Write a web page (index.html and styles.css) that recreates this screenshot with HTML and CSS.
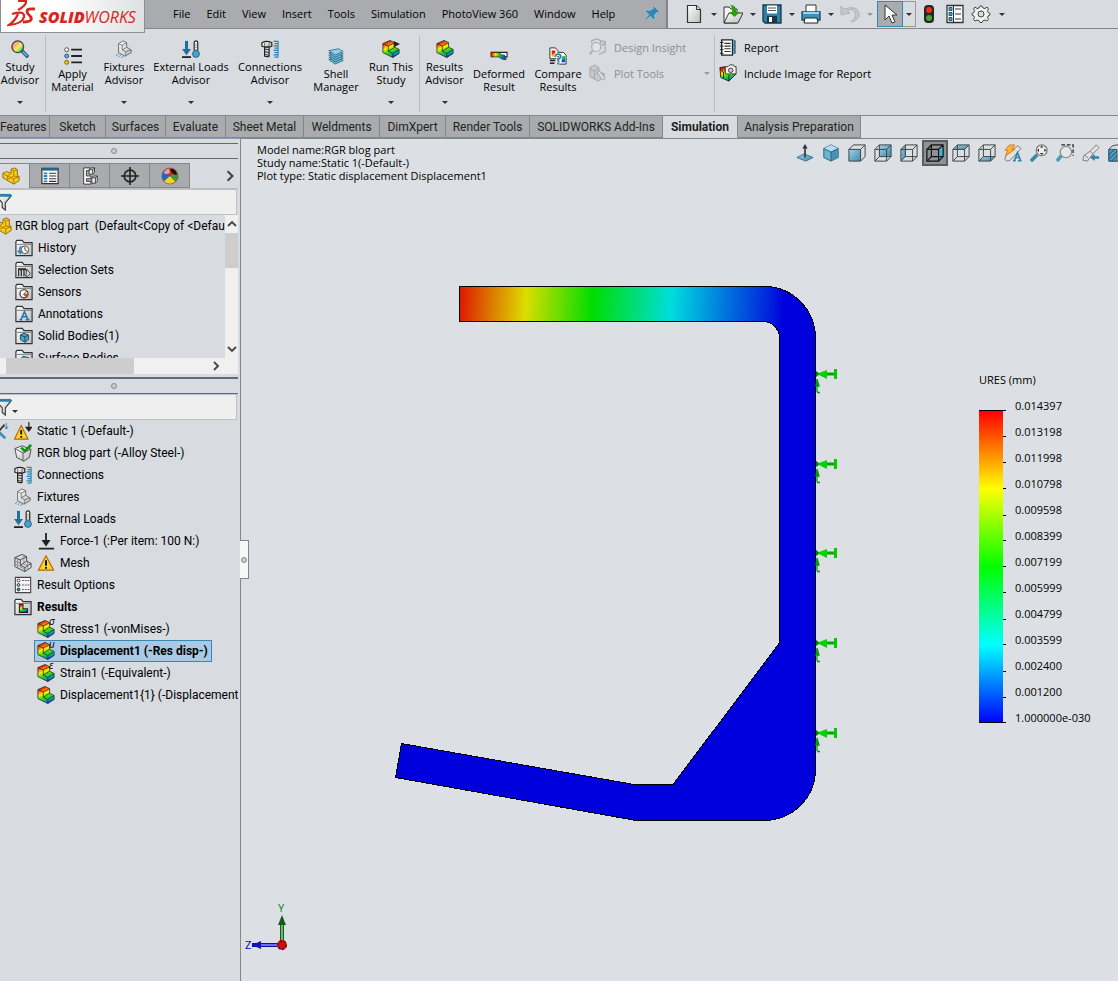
FILE: index.html
```html
<!DOCTYPE html>
<html lang="en">
<head>
<meta charset="utf-8">
<title>SOLIDWORKS Simulation</title>
<link rel="stylesheet" href="styles.css">
</head>
<body>
<svg class="defs" aria-hidden="true">
  <defs>
    <linearGradient id="rain" x1="0" y1="0" x2=".4" y2="1">
      <stop offset=".15" stop-color="#f01000"/><stop offset=".34" stop-color="#ff8a00"/><stop offset=".48" stop-color="#ffee00"/><stop offset=".66" stop-color="#4ae018"/><stop offset=".84" stop-color="#10c040"/><stop offset=".95" stop-color="#0090e0"/><stop offset="1" stop-color="#0050e0"/>
    </linearGradient>
    <linearGradient id="rainH"><stop offset="0" stop-color="#f01000"/><stop offset=".3" stop-color="#ffd800"/><stop offset=".55" stop-color="#20c820"/><stop offset=".85" stop-color="#0058e0"/></linearGradient>
    <linearGradient id="lensfill" x1="0" y1="0" x2="1" y2="1"><stop offset="0" stop-color="#e79ad0"/><stop offset=".35" stop-color="#ffb070"/><stop offset=".55" stop-color="#f4f060"/><stop offset=".8" stop-color="#50d860"/><stop offset="1" stop-color="#40a8e0"/></linearGradient>
    <linearGradient id="metal" x1="0" y1="0" x2="1" y2="1"><stop offset="0" stop-color="#fff"/><stop offset="1" stop-color="#bcbcbc"/></linearGradient>
    <linearGradient id="aqua" x1="0" y1="0" x2="1" y2="1"><stop offset="0" stop-color="#9fd3ec"/><stop offset="1" stop-color="#3c8bae"/></linearGradient>
    <symbol id="block" viewBox="0 0 20 20">
      <path d="M1 4 9 .500l5 2.500v5l5 2.500v4.500L12 19.500 1 14z" stroke="#2c2c2c" stroke-width=".9" stroke-linejoin="round"/>
      <path d="M1 4 7 6.500l7-3.500M7 6.500v6l5 2.500 7-4.500M7 12.500l7-4.500M12 15v4.500" fill="none" stroke="#2c2c2c" stroke-width=".9"/>
    </symbol>
    <symbol id="plot" viewBox="0 0 20 20"><use href="#block" fill="url(#rain)"/></symbol>
    <symbol id="fixture" viewBox="0 0 20 20">
      <path d="M4 4 9 1l4 2v5l5 3v3l-7 4-7-4z" fill="url(#metal)" stroke="#666"/><path d="M4 4l4 2 5-3M8 6v5l4 2 6-2M8 11l5-3M12 13v5" fill="none" stroke="#777"/>
      <path d="M1 18l3-3M4 19l3-3M7 20l3-3" stroke="#3a8db5"/>
    </symbol>
    <symbol id="loads" viewBox="0 0 20 20">
      <path d="M5 1v11" stroke="#1f7199" stroke-width="3.400"/><path d="M0 10h10l-5 7z" fill="#1f7199"/><path d="M0 19h10" stroke="#222" stroke-width="2"/>
      <path d="M13.500 12V3a2 2 0 0 1 4 0v9" fill="#fff" stroke="#222" stroke-width="1.300"/><path d="M15.500 4v9" stroke="#222" stroke-dasharray="1 1"/><circle cx="15.500" cy="15.500" r="3.800" fill="#4aa3cd" stroke="#205f80"/>
    </symbol>
    <symbol id="bolt" viewBox="0 0 20 20">
      <path d="M1 3q5-3 11 0v4q-5 2-11 0z" fill="url(#metal)" stroke="#222" stroke-width="1.300"/><path d="M4 3v4M9 3v4" stroke="#666"/>
      <path d="M4 8h5v10q-2 1-5 0z" fill="#ddd" stroke="#222" stroke-width="1.300"/><path d="M4 10l5 1M4 13l5 1M4 16l5 1" stroke="#222"/>
      <path d="M19 1v18M14 1.500h5M15 4h4M14 6.500h5M15 9h4M14 11.500h5M15 14h4M14 16.500h5M15 19h4" stroke="#2e83ac" stroke-width="1.200"/>
    </symbol>
    <symbol id="lens" viewBox="0 0 20 20">
      <path d="M12 12l7 7" stroke="#1e5876" stroke-width="4"/><path d="M13 13l5 5" stroke="#62b2d6" stroke-width="2"/>
      <circle cx="7.500" cy="7.500" r="6.500" fill="url(#lensfill)" stroke="#444" stroke-width="1.500"/>
    </symbol>
    <symbol id="bullets" viewBox="0 0 20 20">
      <path d="M8 3h12M8 10h12M8 17h12" stroke="#222" stroke-width="2"/><circle cx="3" cy="3" r="2.200" fill="#fff" stroke="#444"/><circle cx="3" cy="10" r="2.200" fill="#54b2dd" stroke="#245a74"/><circle cx="3" cy="17" r="2.200" fill="#ffc000" stroke="#7a5a00"/>
    </symbol>
    <symbol id="shell" viewBox="0 0 20 20">
      <g fill="#6bb6d6" stroke="#1f5e7c" stroke-width=".8" stroke-linejoin="round"><path d="M2 14l11-2 5 3-9 4z"/><path d="M2 11.500l11-2 5 3-9 4z"/><path d="M2 9l11-2 5 3-9 4z"/><path d="M2 6.500l11-2 5 3-9 4z"/><path d="M2 4l11-2 5 3-9 4z" fill="#8fd0ea"/></g>
    </symbol>
    <symbol id="run" viewBox="0 0 20 20"><use href="#block" fill="url(#rain)"/><path d="M13 1l7 3.500-7 3.500z" fill="#222"/></symbol>
    <symbol id="deformed" viewBox="0 0 20 20"><path d="M1 6h18v5h-5" fill="#fff" stroke="#222" stroke-width="1.200"/><path d="M1 6h9q3 4 6 3l2 5q-6 0-8-3H1z" fill="url(#rainH)" stroke="#222" stroke-width=".8"/></symbol>
    <symbol id="compare" viewBox="0 0 20 20">
      <path d="M1 1h6l3 3v9H1z" fill="#fff" stroke="#222"/><path d="M11 6h5l3 3v10h-8z" fill="#fff" stroke="#222"/><path d="M3 4h4v7H3zM14 10h4v7h-4z" fill="url(#rain)"/><path d="M1 15h6M1 18h5" stroke="#222" stroke-width="1.500"/><path d="M7 11q0-3 3-3t3 2.500q0 2-3 3v2m0 2v2" fill="none" stroke="#fff" stroke-width="3.500"/><path d="M7 11q0-3 3-3t3 2.500q0 2-3 3v2m0 2v2" fill="none" stroke="#2480ae" stroke-width="2"/>
    </symbol>
    <symbol id="insight" viewBox="0 0 20 20"><g fill="none" stroke="#a9abae" stroke-width="1.300"><path d="M3 6V3l6-2 4 2 5 1v11l-7 3"/><circle cx="8" cy="10" r="5" fill="#e2e4e7"/><path d="M4 14l-3 4M13 3v3M18 6l-4 2" stroke-width="2"/></g></symbol>
    <symbol id="plottools" viewBox="0 0 20 20"><g fill="#c6c8cb" stroke="#a4a6a9"><path d="M1 4l5-3 5 3v4l6 3v4l-7 4-9-5z"/><path d="M1 5l5 3v9M6 8l5-3M6 12l5-3 6 3" fill="none"/><path d="M9 9l6 9 3-2-6-8z" fill="#dcdde0"/></g></symbol>
    <symbol id="report" viewBox="0 0 20 20"><path d="M3 2h12v17H3z" fill="#fff" stroke="#222" stroke-width="1.500"/><path d="M6 6h7M6 9h7M6 12h7M6 15h7" stroke="#333" stroke-width="1.200"/><path d="M1 5h4M1 9h4M1 13h4M1 17h4" stroke="#222"/><path d="M16 3h2v4h-2M16 8h2v4h-2M16 13h2v4h-2" fill="#3c9bc9" stroke="#1e5876"/></symbol>
    <symbol id="camera" viewBox="0 0 20 20"><path d="M1 4l6-1v7l12 1-8 8-9-4z" fill="url(#rain)" stroke="#222"/><path d="M11 12v7M1 5l4 4v7" fill="none" stroke="#222"/><path d="M7 3h3l2-2h4l1 2h2v8H7z" fill="#f4f4f4" stroke="#333"/><circle cx="13" cy="7" r="2.500" fill="#ccc" stroke="#333"/></symbol>
    <symbol id="new" viewBox="0 0 20 20"><path d="M3.500 1.500h9l4 4v13h-13z" fill="url(#metal)" stroke="#333" stroke-width="1.200"/><path d="M12.500 1.500v4h4" fill="#ddd" stroke="#333"/></symbol>
    <symbol id="open" viewBox="0 0 20 20"><path d="M1 19V3h5l2 2h6v14z" fill="#f4f4f4" stroke="#333"/><path d="M1 19l5-10h14l-5 10z" fill="url(#metal)" stroke="#333"/><path d="M7 1q7 0 6 7h4l-5.500 5L6 8h3q1-4-2-7z" fill="#2f9a12"/></symbol>
    <symbol id="save" viewBox="0 0 20 20"><path d="M1 1h18v18H3l-2-2z" fill="#2f81a8" stroke="#17384a" stroke-width="1.300"/><path d="M5 1.500h10v8H5z" fill="#fff"/><path d="M6 4h8M6 6.500h8" stroke="#555"/><path d="M5 12h10v7H5z" fill="#17384a"/><path d="M7 13h3v5H7z" fill="#fff"/></symbol>
    <symbol id="print" viewBox="0 0 20 20"><path d="M5 9V1h10v8" fill="#fff" stroke="#333"/><path d="M1 8h18v8H1z" fill="#3a93bd" stroke="#17485f" stroke-width="1.300"/><path d="M2 9h16" stroke="#9ad4ef" stroke-width="2"/><path d="M4 14h12l1 5H3z" fill="#fff" stroke="#222"/></symbol>
    <symbol id="undo" viewBox="0 0 20 20"><path d="M1 2v9l9-2-3-2q5-3 8 1 2 5-4 10 9-2 8-9-2-8-15-4z" fill="#c5c7ca" stroke="#b0b2b5"/></symbol>
    <symbol id="cursor" viewBox="0 0 20 20"><path d="M5 1v15l4-4 3 7 3-1-3-7h5z" fill="#fff" stroke="#333"/></symbol>
    <symbol id="traffic" viewBox="0 0 20 20"><rect x="5" y="1" width="10" height="18" rx="4" fill="#262626"/><circle cx="10" cy="6" r="3" fill="#e8321c"/><circle cx="10" cy="14" r="3" fill="#4da33b"/></symbol>
    <symbol id="options" viewBox="0 0 20 20"><path d="M2 1.500h16v17H2z" fill="#fff" stroke="#333" stroke-width="1.300"/><path d="M10 5h6M10 10h6M10 15h6M8.500 2v16" stroke="#333"/><path d="M4 3.500h3v3H4zM4 8.500h3v3H4zM4 13.500h3v3H4z" fill="#43a3cf" stroke="#1e5876"/></symbol>
    <symbol id="gear" viewBox="0 0 20 20"><path d="M9 2h2l1 2 2 .5L16 3l1.500 2-1 1.500.7 2L19 9.500v1.500l-2 1-.5 1.500 1 2L16 17l-2-1-2 .7-1 1.800H9l-1-1.800L6 16l-2 1-1.500-1.700 1-1.800L3 12l-2-1V9.500l2-1 .6-2-1-1.500L4 3l2 1.500L8 4z" fill="#f0f0f0" stroke="#444" stroke-linejoin="round"/><circle cx="10" cy="10" r="3" fill="#d8dbe0" stroke="#444"/></symbol>
    <symbol id="pin" viewBox="0 0 20 20"><path d="M12 1l7 7-2 2-1-1-3 4 1 4-2 1-4-4-6 5-1-1 5-6-4-4 1-2 4 1 5-3-1-1z" fill="#2d86b5" stroke="#c9e0ec" stroke-width=".6"/></symbol>
    <symbol id="part" viewBox="0 0 20 20"><path d="M1 7l4-2 5 2V2.500L14 1l3 2v6l2 1.500V15l-6 4L1 12z" fill="#fbcb1f" stroke="#8a6500" stroke-linejoin="round"/><path d="M1 7l5 3 4-3M6 10v4M10 2.500l3 2 4-1.500M13 4.500V10l-7 4M13 10l6 1M13 13v6M13 13l6-2M6 10l7 3" fill="none" stroke="#a87a00"/></symbol>
    <symbol id="props" viewBox="0 0 20 20"><path d="M1 1.500h18v17H1z" fill="#fff" stroke="#333" stroke-width="1.300"/><path d="M1 2.500h18" stroke="#1f6688" stroke-width="3"/><path d="M9 7h8M9 10h8M9 13h8M9 16h8" stroke="#333" stroke-width="1.200"/><path d="M3 7h4M3 10h4M3 13h4M3 16h4" stroke="#2f81a8" stroke-width="2"/></symbol>
    <symbol id="config" viewBox="0 0 20 20"><path d="M3 1h7v3H6v6h5v3H6v3h5v3H3z" fill="#fff" stroke="#333"/><path d="M9 3l2-2h4v5l-2 2H9zM12 12l2-2h4v6l-2 2h-4z" fill="#eee" stroke="#333"/><path d="M9 3h4v5M13 3l2-2M12 12h4v6M16 12l2-2" fill="none" stroke="#333"/></symbol>
    <symbol id="target" viewBox="0 0 20 20"><circle cx="10" cy="10" r="6.500" fill="none" stroke="#222" stroke-width="1.800"/><path d="M10 0v20M0 10h20" stroke="#222" stroke-width="1.800"/></symbol>
    <symbol id="ball" viewBox="0 0 20 20"><circle cx="10" cy="10" r="9" fill="#d42a20"/><path d="M10 10L3 4.500A9 9 0 0 0 3 16z" fill="#2464c8"/><path d="M10 10l-7 6a9 9 0 0 0 13 0z" fill="#f5cf25"/><path d="M10 10l6 6a9 9 0 0 0 2-10z" fill="#3f9b35"/><path d="M10 3q5-4 8 6-5 0-8-6z" fill="#111"/><path d="M3 7q2-5 6-5l1 4q-3 3-7 1z" fill="#fff" fill-opacity=".55"/><circle cx="10" cy="10" r="9" fill="none" stroke="#666" stroke-width=".7"/></symbol>
    <symbol id="funnel" viewBox="0 0 20 20"><path d="M1 3h17l-6.500 8v8L8 16v-5z" fill="url(#metal)" stroke="#333" stroke-width="1.200"/><path d="M1 2.500h17" stroke="#2583b0" stroke-width="3"/></symbol>
    <symbol id="folder" viewBox="0 0 20 20"><path d="M1 18.500V3l1-1.500h6L10 4h9v14.500z" fill="url(#metal)" stroke="#333" stroke-width="1.300"/><path d="M2 6h16" stroke="#777"/></symbol>
    <symbol id="f-history" viewBox="0 0 20 20"><use href="#folder"/><circle cx="11" cy="12" r="4.200" fill="#fff" stroke="#444"/><path d="M11 9v3l3 2" fill="none" stroke="#333"/><path d="M7 8q-3 3-1 7M3 13l3 3 2-3" fill="none" stroke="#2583b0" stroke-width="1.600"/></symbol>
    <symbol id="f-sets" viewBox="0 0 20 20"><use href="#folder"/><path d="M4 8v9M7 8v9M10 8v9M5 8l2 3M8 8l2 3M11 8l2 3" stroke="#333" stroke-width="1.500"/><path d="M13 9l4 5-3 3h-2z" fill="#ddd" stroke="#333"/></symbol>
    <symbol id="f-sensor" viewBox="0 0 20 20"><use href="#folder"/><circle cx="10" cy="12" r="4.500" fill="#fff" stroke="#333" stroke-width="1.300"/><path d="M9 13l4-4" stroke="#222"/><path d="M10 13l3 3 1-4z" fill="#e03a1a" stroke="#e03a1a"/></symbol>
    <symbol id="f-ann" viewBox="0 0 20 20"><use href="#folder"/><path d="M5 16.500h3M12 16.500h4M6.500 16.500l4-9 4 9M8 13h5" fill="none" stroke="#2078a5" stroke-width="1.700"/></symbol>
    <symbol id="f-solid" viewBox="0 0 20 20"><use href="#folder"/><path d="M6 9l4-2 5 2v5l-4 3-5-3z" fill="#4aa3cd" stroke="#174a63"/><path d="M6 9l5 2 4-2M11 11v6" fill="none" stroke="#174a63"/></symbol>
    <symbol id="f-surface" viewBox="0 0 20 20"><use href="#folder"/><path d="M4 13l5-5 7 2-4 6z" fill="#4aa3cd" stroke="#174a63"/></symbol>
    <symbol id="f-results" viewBox="0 0 20 20"><use href="#folder"/><path d="M6 7h4v5h5v4H6z" fill="url(#rain)" stroke="#222" stroke-width="1.200"/></symbol>
    <symbol id="warn" viewBox="0 0 20 20"><path d="M10 2l8.500 16h-17z" fill="#ffd42a" stroke="#b86800" stroke-width="1.300" stroke-linejoin="round"/><path d="M10 7v6M10 14.500v2" stroke="#111" stroke-width="2.200"/></symbol>
    <symbol id="study" viewBox="0 0 20 20"><path d="M8 4l7.500 15H.5z" fill="#ffd42a" stroke="#b86800" stroke-width="1.300"/><path d="M8 9v5M8 15.500v2" stroke="#111" stroke-width="2"/><path d="M16.500 0v8M13.500 6l3 4 3-4z" fill="#222" stroke="#222" stroke-width="1.300"/></symbol>
    <symbol id="body" viewBox="0 0 20 20"><path d="M1 5l8-3 10 4-2 9-6 4-8-4z" fill="url(#metal)" stroke="#444"/><path d="M1 5l9 5 8-4M10 10v9" fill="none" stroke="#555"/><path d="M8 4l4 4 7-7" fill="none" stroke="#0d9413" stroke-width="3"/></symbol>
    <symbol id="force" viewBox="0 0 20 20"><path d="M10 1v12M2 18.500h17" stroke="#222" stroke-width="2"/><path d="M5 9h10l-5 7z" fill="#222"/></symbol>
    <symbol id="mesh" viewBox="0 0 20 20"><use href="#block" fill="#dcdcdc"/><path d="M4 5v10M11 2v8M15 9v8M1 8l6 2M1 11l11 6M10 11l6 2" stroke="#777" stroke-width=".8"/></symbol>
    <symbol id="ropts" viewBox="0 0 20 20"><path d="M1.500 1.500h17v17h-17z" fill="#f5f5f5" stroke="#444" stroke-width="1.200"/><path d="M9 5h8M9 10h8M9 15h8" stroke="#444" stroke-dasharray="2 1"/><g stroke="#333"><circle cx="5" cy="5" r="1.600" fill="#fff"/><circle cx="5" cy="10" r="1.600" fill="#bbb"/><circle cx="5" cy="15" r="1.600" fill="#2583b0"/></g></symbol>
    <symbol id="tools" viewBox="0 0 20 20"><path d="M1 3l14 14M15 3L3 17" stroke="#333" stroke-width="2"/><path d="M9 12l7 6" stroke="#3a93bd" stroke-width="3"/><path d="M17 1v6M15 5l2 3 2-3" fill="none" stroke="#2583b0"/></symbol>
    <symbol id="wire" viewBox="0 0 20 20"><path d="M1 6h13v13H1zM6 1h13v13H6zM1 6l5-5M14 6l5-5M14 19l5-5M1 19l5-5" fill="none" stroke="#444" stroke-width="1.100"/></symbol>
    <symbol id="v-normal" viewBox="0 0 20 20"><path d="M1 15l8-4 10 4-8 4z" fill="url(#aqua)" stroke="#2e6c8c"/><path d="M10 15V4" stroke="#333" stroke-width="1.800"/><path d="M7 5l3-5 3 5z" fill="#333"/></symbol>
    <symbol id="v-iso" viewBox="0 0 20 20"><path d="M2 5l8-4 8 4v10l-8 4-8-4z" fill="#6db3d2" stroke="#245a74"/><path d="M2 5l8 4 8-4-8-4z" fill="#b2dff2"/><path d="M10 9l8-4v10l-8 4z" fill="#4a91b2"/><path d="M2 5l8 4 8-4M10 9v10" fill="none" stroke="#245a74"/></symbol>
    <symbol id="v-front" viewBox="0 0 20 20"><path d="M1 6h13v13H1z" fill="url(#aqua)"/><path d="M1 6h13v13H1zM1 6l5-5h13l-5 5M19 1v13l-5 5" fill="none" stroke="#444" stroke-width="1.100"/></symbol>
    <symbol id="v-back" viewBox="0 0 20 20"><path d="M6 1h13v13H6z" fill="url(#aqua)"/><use href="#wire"/></symbol>
    <symbol id="v-left" viewBox="0 0 20 20"><path d="M1 6l5-5v13l-5 5z" fill="url(#aqua)"/><use href="#wire"/></symbol>
    <symbol id="v-right" viewBox="0 0 20 20"><path d="M14 6l5-5v13l-5 5z" fill="#4eb2e0"/><path d="M1 6h13v13H1zM6 1h13v13H6zM1 6l5-5M14 6l5-5M14 19l5-5M1 19l5-5" fill="none" stroke="#111" stroke-width="1.300"/></symbol>
    <symbol id="v-top" viewBox="0 0 20 20"><path d="M1 6l5-5h13l-5 5z" fill="url(#aqua)"/><use href="#wire"/></symbol>
    <symbol id="v-bottom" viewBox="0 0 20 20"><path d="M1 19l5-5h13l-5 5z" fill="url(#aqua)"/><use href="#wire"/></symbol>
    <symbol id="v-light" viewBox="0 0 20 20"><path d="M15 2l4 3L7 18l-4 1-2-2 1-4z" fill="#e2e2e2" stroke="#777"/><path d="M6 1h6l-3 5h3L2 13l2-6H1z" fill="#ffb52e" stroke="#c76a00" stroke-width=".8"/><path d="M10 18.500h3M15.500 18.500h4M11.500 18.500l3.500-9 3.500 9M12.500 15h5" fill="none" stroke="#2f81a8" stroke-width="1.700"/></symbol>
    <symbol id="v-fit" viewBox="0 0 20 20"><path d="M8 12l-7 7" stroke="#3c84a7" stroke-width="4"/><circle cx="13" cy="7" r="6" fill="#eee" stroke="#777" stroke-width="1.300"/><path d="M13 2l2 2h-4zM13 12l2-2h-4zM8 7l2-2v4zM18 7l-2-2v4z" fill="#222"/></symbol>
    <symbol id="v-area" viewBox="0 0 20 20"><path d="M6 1h13v12" fill="none" stroke="#222" stroke-width="1.400" stroke-dasharray="4 2"/><path d="M6 13l-5 6" stroke="#4f9bbd" stroke-width="4"/><circle cx="11" cy="9" r="6.300" fill="#e5e8e9" stroke="#888" stroke-width="1.300"/></symbol>
    <symbol id="v-prev" viewBox="0 0 20 20"><path d="M16 1l3 3-7 7-6 8-5-1 1-5 7-5z" fill="#e2e2e2" stroke="#777"/><path d="M9 8l3 3M3 12l4 4" stroke="#777"/><path d="M9 15l5-4v2.500h5v3h-5V19z" fill="#2f81a8"/></symbol>
    <symbol id="v-section" viewBox="0 0 20 20"><path d="M1 6q3-5 10-5h8v18H1z" fill="#ddd" stroke="#333"/><path d="M1 6h9v13H1z" fill="#4f9bbd" stroke="#245a74"/><path d="M1 12l6-6M1 17l9-9M4 19l6-6" stroke="#174a63"/></symbol>
    <symbol id="chev" viewBox="0 0 10 10"><path d="M3 1l4 4-4 4" fill="none" stroke="#444" stroke-width="1.800"/></symbol>
    <symbol id="cu" viewBox="0 0 10 10"><path d="M1 7l4-4 4 4" fill="none" stroke="#444" stroke-width="1.800"/></symbol>
    <symbol id="cd" viewBox="0 0 10 10"><path d="M1 3l4 4 4-4" fill="none" stroke="#444" stroke-width="1.800"/></symbol>
  </defs>
</svg>

<div class="app">
  <header class="topbar">
    <div class="brand">
      <svg class="brand-mark" viewBox="6 0 30 28" aria-hidden="true"><g fill="none" stroke="#d9261c" stroke-width="2.200"><path d="M17 1h8q1 4-8 9"/><path d="M11 14q13-4 12 3-2 7-15 8 6-4 9-11"/><path d="M34 9q-8-1-8 2.500 0 2 3 4.500 2 2 1 4-2 2-8 2" stroke-width="2.800"/></g></svg>
      <span class="brand-name"><b>SOLID</b>WORKS</span>
    </div>
    <nav class="menu">
      <button>File</button><button>Edit</button><button>View</button><button>Insert</button><button>Tools</button><button>Simulation</button><button>PhotoView 360</button><button>Window</button><button>Help</button>
      <button class="pin" aria-label="Pin menu"><svg><use href="#pin"/></svg></button>
    </nav>
    <div class="quick">
      <button aria-label="New"><svg><use href="#new"/></svg></button><button class="drop" aria-label="New options"></button>
      <button aria-label="Open"><svg><use href="#open"/></svg></button><button class="drop" aria-label="Open options"></button>
      <button aria-label="Save"><svg><use href="#save"/></svg></button><button class="drop" aria-label="Save options"></button>
      <button aria-label="Print"><svg><use href="#print"/></svg></button><button class="drop" aria-label="Print options"></button>
      <button aria-label="Undo"><svg><use href="#undo"/></svg></button><button class="drop faded" aria-label="Undo options"></button>
      <button class="select-on" aria-label="Select"><svg><use href="#cursor"/></svg></button><button class="drop select-drop" aria-label="Select options"></button>
      <button class="lone" aria-label="Rebuild"><svg><use href="#traffic"/></svg></button>
      <button class="lone" aria-label="File properties"><svg><use href="#options"/></svg></button>
      <button class="lone" aria-label="Options"><svg><use href="#gear"/></svg></button><button class="drop" aria-label="More options"></button>
    </div>
  </header>

  <section class="ribbon" aria-label="Simulation commands">
    <button class="tool advisor w40"><svg><use href="#lens"/></svg><span>Study<br>Advisor</span></button>
    <i class="rule first"></i>
    <button class="tool low w50"><svg><use href="#bullets"/></svg><span>Apply<br>Material</span></button>
    <button class="tool advisor w52"><svg><use href="#fixture"/></svg><span>Fixtures<br>Advisor</span></button>
    <button class="tool advisor w82"><svg><use href="#loads"/></svg><span>External Loads<br>Advisor</span></button>
    <button class="tool advisor w76"><svg><use href="#bolt"/></svg><span>Connections<br>Advisor</span></button>
    <button class="tool low w56"><svg><use href="#shell"/></svg><span>Shell<br>Manager</span></button>
    <button class="tool advisor w54"><svg><use href="#run"/></svg><span>Run This<br>Study</span></button>
    <i class="rule"></i>
    <button class="tool advisor w48"><svg><use href="#plot"/></svg><span>Results<br>Advisor</span></button>
    <button class="tool low w62"><svg><use href="#deformed"/></svg><span>Deformed<br>Result</span></button>
    <button class="tool low w56"><svg><use href="#compare"/></svg><span>Compare<br>Results</span></button>
    <div class="stack off">
      <button disabled><svg><use href="#insight"/></svg>Design Insight</button>
      <button disabled class="has-drop"><svg><use href="#plottools"/></svg>Plot Tools</button>
    </div>
    <i class="rule"></i>
    <div class="stack">
      <button><svg><use href="#report"/></svg>Report</button>
      <button><svg><use href="#camera"/></svg>Include Image for Report</button>
    </div>
  </section>

  <nav class="tabs">
    <button class="t50 cut">Features</button><button class="t56">Sketch</button><button class="t60">Surfaces</button><button class="t60">Evaluate</button><button class="t78">Sheet Metal</button><button class="t76">Weldments</button><button class="t66">DimXpert</button><button class="t84">Render Tools</button><button class="t133">SOLIDWORKS Add-Ins</button><button class="t74 on">Simulation</button><button class="t124">Analysis Preparation</button>
  </nav>

  <main class="work">
    <aside class="side">
      <div class="grip top"><i></i></div>
      <div class="panes">
        <button class="on" aria-label="Feature tree"><svg><use href="#part"/></svg></button><button aria-label="Properties"><svg><use href="#props"/></svg></button><button aria-label="Configurations"><svg><use href="#config"/></svg></button><button aria-label="Dimensions"><svg><use href="#target"/></svg></button><button aria-label="Display"><svg><use href="#ball"/></svg></button>
        <button class="more" aria-label="More panes"><svg><use href="#chev"/></svg></button>
      </div>
      <label class="filter"><svg><use href="#funnel"/></svg><input type="text" aria-label="Filter features"></label>
      <div class="scroller">
        <ul class="tree">
          <li class="root"><svg><use href="#part"/></svg>RGR blog part&nbsp; (Default&lt;Copy of &lt;Default&gt;</li>
          <li><svg><use href="#f-history"/></svg>History</li>
          <li><svg><use href="#f-sets"/></svg>Selection Sets</li>
          <li><svg><use href="#f-sensor"/></svg>Sensors</li>
          <li class="kids"><svg><use href="#f-ann"/></svg>Annotations</li>
          <li class="kids"><svg><use href="#f-solid"/></svg>Solid Bodies(1)</li>
          <li><svg><use href="#f-surface"/></svg>Surface Bodies</li>
        </ul>
        <div class="vbar"><svg><use href="#cu"/></svg><i></i><svg><use href="#cd"/></svg></div>
        <div class="hbar"><i></i><svg><use href="#chev"/></svg></div>
      </div>
      <div class="grip"><i></i></div>
      <label class="filter second"><svg><use href="#funnel"/></svg><input type="text" aria-label="Filter study"></label>
      <ul class="tree study">
        <li class="study-root"><svg class="ext"><use href="#tools"/></svg><svg><use href="#study"/></svg>Static 1 (-Default-)</li>
        <li><svg><use href="#body"/></svg>RGR blog part (-Alloy Steel-)</li>
        <li><svg><use href="#bolt"/></svg>Connections</li>
        <li class="kids"><svg><use href="#fixture"/></svg>Fixtures</li>
        <li class="kids"><svg><use href="#loads"/></svg>External Loads</li>
        <li class="deep"><svg><use href="#force"/></svg>Force-1 (:Per item: 100 N:)</li>
        <li><svg><use href="#mesh"/></svg><svg><use href="#warn"/></svg>Mesh</li>
        <li><svg><use href="#ropts"/></svg>Result Options</li>
        <li class="kids strong"><svg><use href="#f-results"/></svg>Results</li>
        <li class="deep"><svg><use href="#plot"/></svg><em>σ</em>Stress1 (-vonMises-)</li>
        <li class="deep strong"><span class="picked"><svg><use href="#plot"/></svg><em>u</em>Displacement1 (-Res disp-)</span></li>
        <li class="deep"><svg><use href="#plot"/></svg><em>ε</em>Strain1 (-Equivalent-)</li>
        <li class="deep"><svg><use href="#plot"/></svg>Displacement1{1} (-Displacement-</li>
      </ul>
      <button class="handle" aria-label="Collapse panel"><i></i></button>
    </aside>

    <section class="canvas" aria-label="Graphics area">
      <div class="canvas-head">
        <p>Model name:RGR blog part<br>Study name:Static 1(-Default-)<br>Plot type: Static displacement Displacement1</p>
        <div class="views">
          <button aria-label="Normal to"><svg><use href="#v-normal"/></svg></button><button aria-label="Isometric"><svg><use href="#v-iso"/></svg></button><button aria-label="Front"><svg><use href="#v-front"/></svg></button><button aria-label="Back"><svg><use href="#v-back"/></svg></button><button aria-label="Left"><svg><use href="#v-left"/></svg></button><button class="on" aria-label="Right"><svg><use href="#v-right"/></svg></button><button aria-label="Top"><svg><use href="#v-top"/></svg></button><button aria-label="Bottom"><svg><use href="#v-bottom"/></svg></button><button aria-label="Annotation view"><svg><use href="#v-light"/></svg></button><button aria-label="Zoom to fit"><svg><use href="#v-fit"/></svg></button><button aria-label="Zoom to area"><svg><use href="#v-area"/></svg></button><button aria-label="Previous view"><svg><use href="#v-prev"/></svg></button><button aria-label="Section view"><svg><use href="#v-section"/></svg></button>
        </div>
      </div>

      <svg class="model" viewBox="391 280 450 550" aria-label="Displacement plot">
        <defs>
          <linearGradient id="ures" gradientUnits="userSpaceOnUse" x1="459" x2="800" y1="300" y2="320">
            <stop offset="0" stop-color="#dd1600"/><stop offset=".09" stop-color="#dd7400"/><stop offset=".195" stop-color="#dddd00"/><stop offset=".39" stop-color="#00dd00"/><stop offset=".62" stop-color="#00dddd"/><stop offset=".8" stop-color="#0068dd"/><stop offset=".9" stop-color="#0028dd"/><stop offset=".95" stop-color="#0000dd"/>
          </linearGradient>
          <g id="fix">
            <path d="M1 5v13M1 18.500h3M0 12l1-7 2 7z" stroke="#0a9a0a" stroke-width="1.300" fill="#0a9a0a"/>
            <path d="M10 0h9" stroke="#00a800" stroke-width="3"/><path d="M0-3v6l3-2 8 4v-9l-8 3z" fill="#00d400"/><path d="M0-3v6l3-3z" fill="#067806"/><path d="M18-5h3v10h-3z" fill="#00cc00"/>
          </g>
          <path id="outline" d="M459.500 286.500H764A51 52 0 0 1 815.500 338.500V769A52 51 0 0 1 764 820.500H636L395.500 777.500 401.500 743.500 634 784.500H673L779.500 643V338.500A16 17 0 0 0 763 321.500H459.500z"/>
          <clipPath id="upper"><path d="M455 280h370v120H455z"/></clipPath>
        </defs>
        <use href="#outline" fill="#0000dd"/>
        <use href="#outline" fill="url(#ures)" clip-path="url(#upper)"/>
        <use href="#outline" fill="none" stroke="#000" shape-rendering="crispEdges"/>
        <use href="#fix" x="816" y="374"/><use href="#fix" x="816" y="464"/><use href="#fix" x="816" y="553"/><use href="#fix" x="816" y="643"/><use href="#fix" x="816" y="733"/>
      </svg>

      <div class="legend">
        <h2>URES (mm)</h2>
        <svg class="scale" viewBox="0 0 28 314" shape-rendering="crispEdges" aria-hidden="true">
          <defs><linearGradient id="bar" x1="0" y1="0" x2="0" y2="1"><stop offset="0" stop-color="#f00"/><stop offset=".25" stop-color="#ff0"/><stop offset=".5" stop-color="#0f0"/><stop offset=".75" stop-color="#0ff"/><stop offset="1" stop-color="#00f"/></linearGradient></defs>
          <path d="M0 1h24v312H0z" fill="url(#bar)"/>
          <path d="M0 .5h27M24 26.500h3M24 52.500h3M24 78.500h3M24 105.500h3M24 130.500h3M24 156.500h3M24 182.500h3M24 209.500h3M24 234.500h3M24 261.500h3M24 287.500h3M0 312.500h27" stroke="#000"/>
        </svg>
        <ul>
          <li>0.014397</li><li>0.013198</li><li>0.011998</li><li>0.010798</li><li>0.009598</li><li>0.008399</li><li>0.007199</li><li>0.005999</li><li>0.004799</li><li>0.003599</li><li>0.002400</li><li>0.001200</li><li>1.000000e-030</li>
        </ul>
      </div>

      <svg class="triad" viewBox="0 0 50 54" aria-label="Axes">
        <path d="M10 44h27" stroke="#10109a" stroke-width="4"/><path d="M16 44h20" stroke="#6c6cf0" stroke-width="2"/><path d="M10 44l9-4v8z" fill="#1414b8"/>
        <path d="M40 42V20" stroke="#1c5c1c" stroke-width="4"/><path d="M40 42V22" stroke="#6ab86a" stroke-width="2"/><path d="M40 14l-4 10h8z" fill="#145a14"/>
        <circle cx="40" cy="44" r="5" fill="#d01010"/><circle cx="40" cy="44" r="4" fill="none" stroke="#6a1010" stroke-width="2" stroke-dasharray="2 2"/>
        <text x="36" y="11" fill="#008000">Y</text><text x="3" y="48" fill="#0000e0">Z</text>
      </svg>
    </section>
  </main>
</div>
</body>
</html>
```
FILE: styles.css
```css
* { box-sizing: border-box; }

body {
  margin: 0;
  background: #dce0e4;
  color: #000;
  font: 11px/13px "Open Sans", "Noto Sans", sans-serif;
}

button {
  margin: 0;
  padding: 0;
  border: 0;
  background: none;
  color: inherit;
  font: inherit;
  white-space: nowrap;
}

ul, p, h2 { margin: 0; padding: 0; list-style: none; font-weight: normal; }
svg { display: block; flex: none; width: 18px; height: 18px; }
.defs { position: absolute; width: 0; height: 0; }

.app { display: flex; flex-direction: column; min-height: 100vh; overflow: hidden; }

/* Title row */
.topbar { display: flex; height: 29px; background: #d8dbe0; border-bottom: 1px solid #85868a; }
.brand {
  position: relative;
  z-index: 1;
  display: flex;
  gap: 2px;
  width: 145px;
  height: 33px;
  padding: 0 0 0 6px;
  border: 1px solid #8e8f92;
  border-width: 0 1px 1px;
  background: linear-gradient(90deg, #fff 40%, #dfe0e2);
  color: #d9261c;
}
.brand-mark { width: 30px; height: 28px; }
.brand-name { font: italic 16px/34px "Open Sans", sans-serif; }
.brand-name b { font-weight: 800; }
.menu { display: flex; align-items: center; gap: 16px; width: 523px; padding: 0 0 2px 28px; background: #a9abae; border-right: 2px solid #85868a; }
.menu .pin { margin-left: auto; margin-right: 6px; }
.pin svg { width: 16px; height: 16px; }
.quick { display: flex; align-items: center; padding-left: 14px; }
.quick button { display: grid; place-items: center; width: 24px; height: 26px; }
.quick .drop { width: 15px; }
.quick svg { width: 20px; height: 20px; }
.drop::after, .advisor::after, .has-drop::after { content: ""; border: 3px solid transparent; border-top-color: #333; border-bottom: 0; }
.quick .faded::after { border-top-color: #999; }
.quick .select-on { width: 26px; background: #a9abae; border: 1px solid #3a86b4; }
.quick .select-drop { width: 13px; border: 1px solid #999; border-left: 0; }
.quick .lone { width: 26px; }

/* Ribbon */
.ribbon { display: flex; height: 86px; padding-bottom: 2px; background: #d8dbe0; }
.tool { display: flex; flex-direction: column; align-items: center; padding-top: 11px; line-height: 13px; }
.tool span { margin-top: 2px; }
.tool.low { padding-top: 18px; }
.advisor::after { margin-top: 15px; }
.rule { width: 1px; margin: 6px 1px 1px; background: #bcbdc1; }
.rule.first { margin-left: 5px; }
.w40 { width: 40px; } .w48 { width: 47px; } .w50 { width: 51px; } .w52 { width: 52px; } .w54 { width: 54px; }
.w56 { width: 56px; } .w62 { width: 62px; } .w76 { width: 76px; } .w82 { width: 82px; }
.stack { display: flex; flex-direction: column; gap: 6px; padding: 8px 3px 0; }
.stack button { display: flex; align-items: center; gap: 7px; height: 20px; }
.stack.off { width: 127px; color: #8d8f93; }
.has-drop::after { margin-left: auto; border-top-color: #999; }

/* Command tabs */
.tabs { display: flex; height: 23px; border-top: 1px solid #85868a; }
.tabs button { overflow: hidden; font: 12px/16px Roboto, "Open Sans", sans-serif; background: #a9abae; border-right: 1px solid #85868a; border-bottom: 1px solid #85868a; color: #222; }
.tabs .on { background: #d8dbe0; font-weight: bold; border-bottom-color: #d8dbe0; }
.t50 { width: 50px; } .t56 { width: 56px; } .t60 { width: 60px; } .t66 { width: 66px; } .t74 { width: 75px; }
.t76 { width: 76px; } .t78 { width: 78px; } .t84 { width: 84px; } .t124 { width: 123px; } .t133 { width: 133px; }
.tabs .cut { padding-right: 8px; }

.work { display: flex; flex: 1; }

/* Side panel */
.side { position: relative; flex: none; width: 241px; padding-right: 2px; background: #d8dbe0; border-right: 1px solid #85868a; border-top: 1px solid #8f9fb0; }
.grip { display: grid; place-items: center; height: 17px; padding-right: 10px; border-top: 2px solid #62687f; border-bottom: 1px solid #62687f; }
.grip.top { margin-top: 4px; height: 16px; border-top-width: 1px; }
.grip i, .handle i { width: 6px; height: 6px; border: 1px solid #888; border-radius: 50%; background: #ccc; }
.panes { display: flex; height: 30px; padding-top: 4px; border-bottom: 1px solid #bbb; }
.panes button { display: grid; place-items: center; width: 40px; background: #a9abae; border: 1px solid #85868a; border-width: 1px 1px 1px 0; }
.panes .on { width: 30px; background: #d8dbe0; padding-right: 8px; border-bottom: 0; }
.panes .more { width: 16px; margin-left: auto; background: none; border: 0; }
.more svg { width: 12px; height: 12px; }
.filter { display: flex; align-items: center; height: 26px; margin-right: 1px; background: #efefef; border: 1px solid #bfc0c3; border-left: 0; }
.filter svg { margin-left: -5px; }
.filter input { flex: 1; min-width: 0; border: 0; background: none; font: inherit; }
.filter.second { position: relative; }
.filter.second::after { content: ""; position: absolute; left: 12px; top: 15px; border: 3px solid transparent; border-top-color: #333; border-bottom: 0; }
.scroller { display: grid; grid-template: 143px 16px / 1fr 13px; margin-bottom: 3px; }
.tree { overflow: hidden; font: 12px/16px Roboto, "Open Sans", sans-serif; white-space: nowrap; }
.tree li { position: relative; display: flex; align-items: center; gap: 5px; height: 22px; padding-left: 15px; }
.tree .root { gap: 3px; padding-left: 0; }
.root svg { margin-left: -6px; }
.tree .kids::before { content: ""; position: absolute; left: -3px; border: 3px solid transparent; border-left-color: #555; }
.vbar { display: flex; flex-direction: column; align-items: center; background: #f0f0f0; }
.vbar svg, .hbar svg { width: 10px; height: 10px; margin: 4px; }
.vbar i { width: 13px; height: 35px; background: #cdcdcd; }
.vbar svg:last-child { margin-top: auto; }
.hbar { grid-column: 1 / 3; display: flex; align-items: center; background: #f0f0f0; }
.hbar i { width: 128px; height: 16px; margin-left: 6px; background: #cdcdcd; }
.hbar svg { margin-left: auto; margin-right: 17px; }
.tree.study li { padding-left: 14px; }
.study .ext { position: absolute; left: -9px; }
.tree.study .deep { padding-left: 37px; }
.tree em { position: absolute; left: 49px; top: -3px; font: italic 10px/13px "Open Sans", sans-serif; }
.tree .strong { font-weight: bold; }
.picked { position: relative; display: flex; align-items: center; gap: 5px; height: 22px; margin-left: -3px; padding: 0 3px 0 2px; background: #a9c9e4; border: 1px solid #3a86b4; }
.tree .picked em { left: 14px; }
.handle { position: absolute; top: 401px; right: -9px; z-index: 1; display: grid; place-items: center; width: 9px; height: 39px; background: #f8f8f8; border: 1px solid #85868a; border-left: 0; }

/* Graphics area */
.canvas { position: relative; flex: 1; min-width: 0; overflow: hidden; border-top: 1px solid #85868a; }
.canvas-head { display: flex; justify-content: space-between; padding: 1px 0 0 16px; }
.canvas-head p { padding-top: 3px; }
.views { display: flex; margin-right: -12px; }
.views button { display: grid; place-items: center; width: 26px; height: 26px; }
.views .on { background: #8f9194; border: 2px solid #5c5d60; }
.model { position: absolute; left: 150px; top: 141px; width: 450px; height: 550px; }
.legend { position: absolute; top: 234px; right: 0; width: 139px; display: grid; grid-template-columns: 28px 1fr; column-gap: 8px; }
.legend h2 { grid-column: 1 / 3; height: 20px; font: inherit; }
.scale { width: 28px; height: 314px; margin-top: 17px; }
.legend ul { line-height: 26px; }
.legend li { height: 26px; }
.triad { position: absolute; left: 1px; bottom: 26px; width: 50px; height: 54px; }
.triad text { font: 11px "Open Sans", sans-serif; }
```
